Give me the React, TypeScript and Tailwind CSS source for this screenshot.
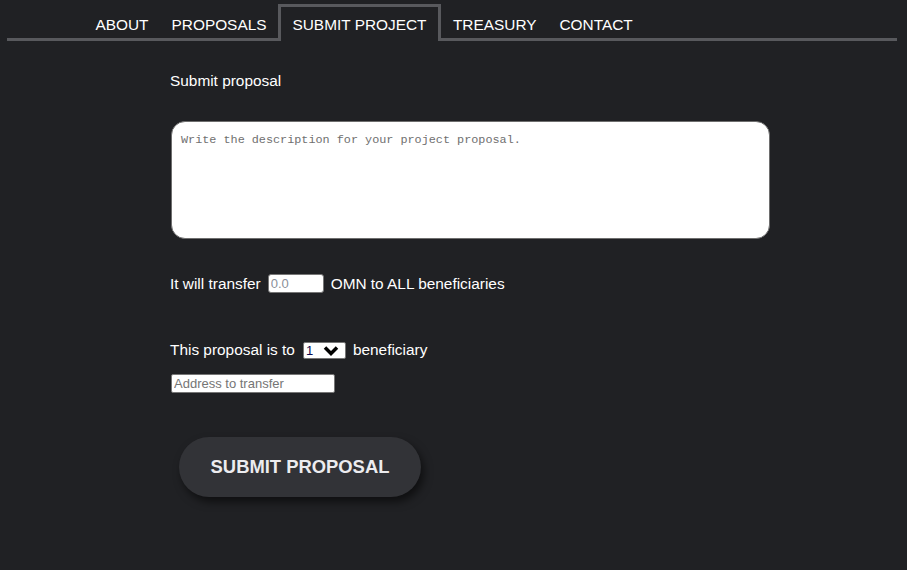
import React from "react";

const tabs = ["ABOUT", "PROPOSALS", "SUBMIT PROJECT", "TREASURY", "CONTACT"];

const Nav = () => {
  return (
    <ul className="ml-[7px] mr-[10px] flex border-b-[3px] border-[#58595d] pl-[77px] pt-1">
      {tabs.map((t) => (
        <li
          key={t}
          className={
            t === "SUBMIT PROJECT"
              ? "-mb-[3px] border-[3px] border-b-0 border-[#58595d] bg-[#202124] pl-[11.5px] pr-[12px] pb-[8px] pt-[9px] leading-[17px]"
              : "-mb-[3px] border-t-[3px] border-transparent px-[11.5px] pb-[8px] pt-[9px] leading-[17px]"
          }
        >
          <a href="#" className="text-white">
            {t}
          </a>
        </li>
      ))}
    </ul>
  );
};

const App = () => {
  return (
    <div className="min-h-[570px] bg-[#202124] font-['Liberation_Sans',Arial,sans-serif] text-[15.4px] text-white">
      <Nav />
      <div className="ml-[170px] flex flex-col items-start">
        <p className="mt-[31px] leading-[18px]">Submit proposal</p>
        <textarea
          placeholder="Write the description for your project proposal."
          className="ml-px mt-[31px] h-[118px] w-[599px] resize-none rounded-[14px] border-[1.5px] border-[#6e6e6e] bg-white px-[9px] pt-[10px] font-['Liberation_Mono',monospace] text-[11.8px] text-black outline-none placeholder:text-[#707070]"
        />
        <div className="mt-[35px] flex h-[19px] items-center">
          <span>It will transfer</span>
          <input
            placeholder="0.0"
            className="ml-[7px] mr-[7px] h-[19px] w-[56px] rounded-[3px] border border-[#767676] bg-white px-[2px] text-[13px] text-black outline-none placeholder:text-[#8a8f99]"
          />
          <span>OMN to ALL beneficiaries</span>
        </div>
        <div className="mt-[48px] flex h-[18px] items-center">
          <span>This proposal is to</span>
          <div className="relative ml-[8px] mr-[7px] flex">
            <select className="h-[17px] w-[43px] appearance-none rounded-[2px] border border-[#767676] bg-white pl-[2px] text-[13px] leading-[15px] text-[#0a0a50] outline-none">
              <option>1</option>
              <option>2</option>
              <option>3</option>
            </select>
            <svg
              viewBox="0 0 16 11"
              className="pointer-events-none absolute right-[7px] top-[3px] h-[11px] w-[16px]"
            >
              <path d="M2 2.5 L8 8.5 L14 2.5" fill="none" stroke="#000" strokeWidth="3.5" />
            </svg>
          </div>
          <span>beneficiary</span>
        </div>
        <input
          placeholder="Address to transfer"
          className="ml-[1px] mt-[15px] h-[19px] w-[164px] rounded-[2px] border border-[#767676] bg-white px-[2px] text-[13px] text-black outline-none placeholder:text-[#757575]"
        />
        <button className="ml-[9px] mt-[44px] h-[60px] w-[242px] rounded-full bg-[#323337] text-[18.4px] font-bold text-[#ececef] shadow-[3px_5px_8px_rgba(0,0,0,0.55)]">
          SUBMIT PROPOSAL
        </button>
      </div>
    </div>
  );
};

export default App;
